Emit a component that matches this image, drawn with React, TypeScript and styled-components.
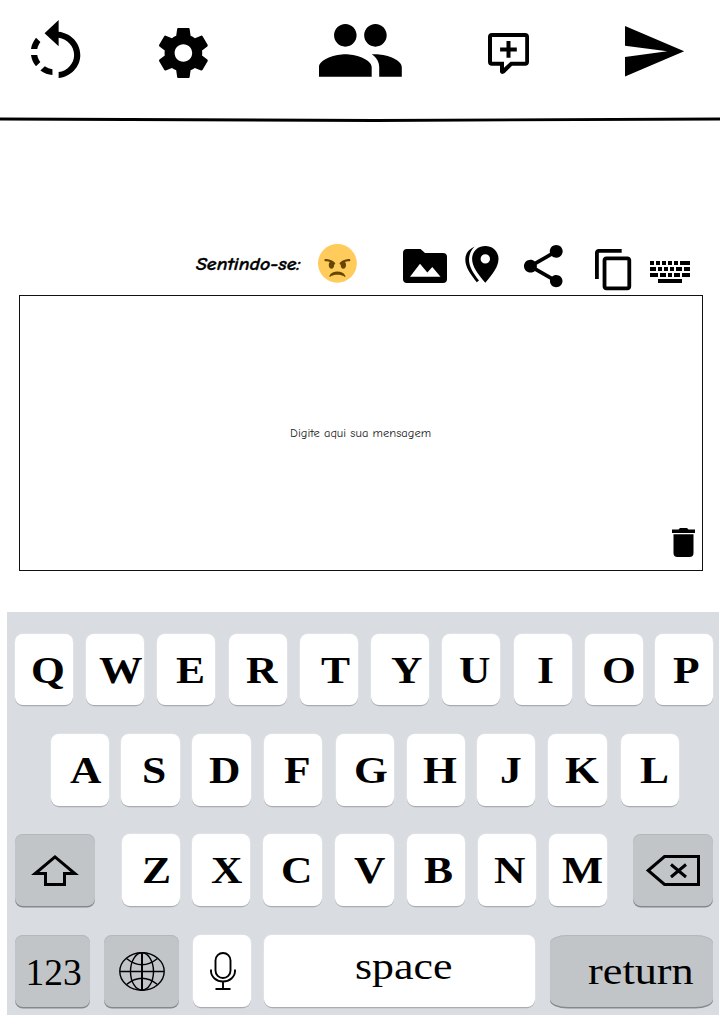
import React from "react";
import styled, { createGlobalStyle } from "styled-components";

const GlobalStyle = createGlobalStyle`
  * { box-sizing: border-box; }
  body { margin: 0; background: #fff; }
`;

const Page = styled.main`
  width: 720px;
  height: 1024px;
  display: flex;
  flex-direction: column;
  overflow: hidden;
  background: #fff;
  color: #000;
`;

const Header = styled.header`
  height: 117px;
  display: flex;
  align-items: flex-start;
`;

const IconButton = styled.button<{ $left: number; $top: number }>`
  display: block;
  flex: none;
  padding: 0;
  border: 0;
  background: none;
  color: inherit;
  margin: ${(p) => p.$top}px 0 0 ${(p) => p.$left}px;
`;

const Drawing = styled.svg`
  display: block;
  fill: currentColor;
  overflow: visible;
`;

const Divider = styled(Drawing)`
  flex: none;
`;

const Tools = styled.section`
  height: 172px;
  padding-top: 120px;
  display: flex;
  align-items: flex-start;
`;

const Feeling = styled.span`
  flex: none;
  width: 107px;
  margin: 11px 0 0 196px;
  font: italic 700 17px/22px "Comic Sans MS", "Comic Neue", "DejaVu Sans", sans-serif;
  white-space: nowrap;
  transform: scaleX(1.17);
  transform-origin: left;
  -webkit-text-stroke: 0.3px #000;
`;

const MessageBox = styled.section`
  width: 684px;
  height: 276px;
  margin-left: 19px;
  border: 1px solid #111;
  display: grid;
  grid-template-rows: 1fr auto;
  flex: none;
`;

const Placeholder = styled.p`
  margin: 129px 0 0 270px;
  font: 400 12px/16px "Comic Sans MS", "Comic Neue", "Open Sans", sans-serif;
  color: #222;
  white-space: nowrap;
  transform: scaleX(1.045);
  transform-origin: left;
`;

const BoxFooter = styled.div`
  display: flex;
  justify-content: flex-end;
  padding: 0 7px 13px 0;
`;

const Keyboard = styled.section`
  width: 712px;
  height: 403.5px;
  margin: 40.5px 0 0 7px;
  padding-top: 22px;
  background: #d9dce1;
  flex: none;
`;

const Row = styled.div<{ $gap: number }>`
  display: flex;
  align-items: flex-start;
  height: 72.3px;
  margin-bottom: ${(p) => p.$gap}px;
`;

const KeyCap = styled.button<{ $w?: number; $ml: number; $dark?: boolean; $round?: string; $h?: number }>`
  flex: none;
  display: flex;
  align-items: flex-start;
  width: ${(p) => p.$w ?? 58.3}px;
  height: ${(p) => p.$h ?? 71.8}px;
  margin: 0 0 0 ${(p) => p.$ml}px;
  padding: 0;
  border: 0;
  border-radius: ${(p) => p.$round ?? "8px"};
  background: ${(p) => (p.$dark ? "#c1c5c8" : "#fff")};
  box-shadow: ${(p) =>
    p.$dark
      ? "0 1.5px 0 #85898b, inset 0 1px 0 #b4b8bb"
      : "0 1.2px 0.5px #a9acb0, 0 0 0 0.5px #e6e8eb"};
  color: #000;
`;

const Label = styled.span<{ $x: number; $y?: number; $plain?: boolean; $stretch?: number }>`
  display: block;
  margin: ${(p) => p.$y ?? 18}px 0 0 ${(p) => p.$x}px;
  width: 0;
  white-space: nowrap;
  font-family: "Liberation Serif", "Times New Roman", serif;
  font-size: 37.5px;
  line-height: 37.5px;
  font-weight: ${(p) => (p.$plain ? 400 : 700)};
  transform: scaleX(${(p) => p.$stretch ?? 1.16});
  transform-origin: 0 0;
`;

type GlyphProps = { box: string; w: number; h: number; children: React.ReactNode };

const Glyph = ({ box, w, h, children }: GlyphProps) => (
  <Drawing viewBox={box} width={w} height={h} preserveAspectRatio="none" aria-hidden>
    {children}
  </Drawing>
);

type Letter = [char: string, marginLeft: number, labelX: number];

const topRow: Letter[] = [
  ["Q", 7.7, 16.4], ["W", 12.7, 13.5], ["E", 12.7, 18.9], ["R", 13.7, 17.5], ["T", 12.7, 21.5],
  ["Y", 12.7, 20], ["U", 12.7, 17.3], ["I", 13.7, 23.8], ["O", 12.7, 17.3], ["P", 11.7, 18.2],
];
const homeRow: Letter[] = [
  ["A", 43.5, 19.2], ["S", 12.7, 20.2], ["D", 12.7, 16.7], ["F", 13.2, 19.9], ["G", 13.4, 18],
  ["H", 12.7, 16.8], ["J", 12, 22.6], ["K", 13, 17], ["L", 14, 19.2],
];
const lowRow: Letter[] = [
  ["Z", 26.8, 20.5], ["X", 11.9, 19.2], ["C", 13.2, 18], ["V", 13.7, 18.9], ["B", 12.8, 17.5],
  ["N", 12.7, 16.8], ["M", 12.8, 13.4],
];

const Letters = ({ keys }: { keys: Letter[] }) => (
  <>
    {keys.map(([char, ml, x]) => (
      <KeyCap key={char} $ml={ml}>
        <Label $x={x}>{char}</Label>
      </KeyCap>
    ))}
  </>
);

export default function App() {
  return (
    <Page>
      <GlobalStyle />
      <Header>
        <IconButton $left={31} $top={20.3} aria-label="Desfazer">
          <Glyph box="4.07 1 15.93 19.93" w={49.3} h={58}>
            <path d="M7.11 8.53L5.7 7.11C4.8 8.27 4.24 9.61 4.07 11h2.02c.14-.87.49-1.72 1.02-2.47zM6.09 13H4.07c.17 1.39.72 2.73 1.62 3.89l1.41-1.42c-.52-.75-.87-1.59-1.01-2.47zm1.01 5.32c1.16.9 2.51 1.44 3.9 1.61V17.9c-.87-.15-1.71-.49-2.46-1.03L7.1 18.32zM13 4.07V1L8.45 5.55 13 10V7.09c2.84.48 5 2.94 5 5.91s-2.16 5.43-5 5.91v2.02c3.95-.49 7-3.85 7-7.93s-3.05-7.44-7-7.93z" />
          </Glyph>
        </IconButton>
        <IconButton $left={78.5} $top={28} aria-label="Configurações">
          <Glyph box="2.27 2 19.46 20" w={48.8} h={50}>
            <path d="M19.43 12.98c.04-.32.07-.64.07-.98s-.03-.66-.07-.98l2.11-1.65c.19-.15.24-.42.12-.64l-2-3.46c-.12-.22-.39-.3-.61-.22l-2.49 1c-.52-.4-1.08-.73-1.69-.98l-.38-2.65C14.46 2.18 14.25 2 14 2h-4c-.25 0-.46.18-.49.42l-.38 2.65c-.61.25-1.17.59-1.69.98l-2.49-1c-.23-.09-.49 0-.61.22l-2 3.46c-.13.22-.07.49.12.64l2.11 1.65c-.04.32-.07.65-.07.98s.03.66.07.98l-2.11 1.65c-.19.15-.24.42-.12.64l2 3.46c.12.22.39.3.61.22l2.49-1c.52.4 1.08.73 1.69.98l.38 2.65c.03.24.24.42.49.42h4c.25 0 .46-.18.49-.42l.38-2.65c.61-.25 1.17-.59 1.69-.98l2.49 1c.23.09.49 0 .61-.22l2-3.46c.12-.22.07-.49-.12-.64l-2.11-1.65zM12 15.5c-1.93 0-3.5-1.57-3.5-3.5s1.57-3.5 3.5-3.5 3.5 1.57 3.5 3.5-1.57 3.5-3.5 3.5z" />
          </Glyph>
        </IconButton>
        <IconButton $left={111} $top={24.3} aria-label="Pessoas">
          <Glyph box="1 5 22 14" w={82.8} h={52.8}>
            <path d="M16 11c1.66 0 2.99-1.34 2.99-3S17.66 5 16 5c-1.66 0-3 1.34-3 3s1.34 3 3 3zm-8 0c1.66 0 2.99-1.34 2.99-3S9.66 5 8 5C6.34 5 5 6.34 5 8s1.34 3 3 3zm0 2c-2.33 0-7 1.17-7 3.5V19h14v-2.5c0-2.33-4.67-3.5-7-3.5zm8 0c-.29 0-.62.02-.97.05 1.16.84 1.97 1.97 1.97 3.45V19h6v-2.5c0-2.33-4.67-3.5-7-3.5z" />
          </Glyph>
        </IconButton>
        <IconButton $left={86.5} $top={33} aria-label="Nova mensagem">
          <Glyph box="0 0 41 41" w={41} h={41}>
            <path fillRule="evenodd" d="M4 0h33a4 4 0 0 1 4 4v24.7a4 4 0 0 1-4 4H24l-7.3 7.4C15 41.6 12 41 12 38.5v-5.8H4a4 4 0 0 1-4-4V4a4 4 0 0 1 4-4zM4 4v24.700h12v6l6.600-6H37.200V4z" />
            <path d="M18.500 8h4v6.400h6.300v4h-6.300v6.300h-4v-6.300h-6.400v-4h6.400z" />
          </Glyph>
        </IconButton>
        <IconButton $left={96.5} $top={25.7} aria-label="Enviar">
          <Glyph box="2 3 21 18" w={59.2} h={50.6}>
            <path d="M2.010 21L23 12 2.010 3 2 10l15 2-15 2z" />
          </Glyph>
        </IconButton>
      </Header>
      <Divider width={720} height={6} viewBox="0 0 720 6" aria-hidden>
        <path d="M0 2Q180 2.500 375 3.500Q560 3 720 2" fill="none" stroke="#000" strokeWidth={2.8} />
      </Divider>
      <Tools>
        <Feeling>Sentindo-se:</Feeling>
        <IconButton $left={15} $top={1.4} aria-label="Bravo">
          <Glyph box="0 0 36 36" w={38.8} h={38.8}>
            <circle cx="18" cy="18" r="18" fill="#ffcb5a" />
            <path fill="#664500" d="M25.485 29.879C25.44 29.7 24.317 25.5 18 25.5c-6.318 0-7.44 4.2-7.485 4.379-.055.217.043.442.237.554.195.111.439.078.6-.077.019-.019 1.954-1.856 6.648-1.856s6.63 1.837 6.648 1.855c.096.095.224.145.352.145.084 0 .169-.021.246-.064.196-.112.294-.339.239-.557zm-9.778-12.586C12.452 14.038 7.221 14 7 14c-.552 0-.999.447-.999.998-.001.552.446 1 .998 1.002.029 0 1.925.022 3.983.737-.593.64-.982 1.634-.982 2.763 0 1.934 1.119 3.5 2.5 3.5s2.5-1.566 2.5-3.5c0-.174-.019-.34-.037-.507.013 0 .025.007.037.007.256 0 .512-.098.707-.293.391-.391.391-1.023 0-1.414zM29 14c-.221 0-5.451.038-8.707 3.293-.391.391-.391 1.023 0 1.414.195.195.451.293.707.293.013 0 .024-.007.036-.007-.016.167-.036.333-.036.507 0 1.934 1.119 3.5 2.5 3.5s2.5-1.566 2.5-3.5c0-1.129-.389-2.123-.982-2.763 2.058-.715 3.954-.737 3.984-.737.551-.002.998-.45.997-1.002-.001-.551-.447-.998-.999-.998z" />
          </Glyph>
        </IconButton>
        <IconButton $left={46.2} $top={6} aria-label="Imagens">
          <Glyph box="0 0 44 34" w={44} h={34}>
            <path fillRule="evenodd" d="M4 0h13.500l4.500 4h18a4 4 0 0 1 4 4v22a4 4 0 0 1-4 4H4a4 4 0 0 1-4-4V4a4 4 0 0 1 4-4zM7 27.700h30.500L29.300 18l-5 5.500L17 14.700z" />
          </Glyph>
        </IconButton>
        <IconButton $left={18.3} $top={2.5} aria-label="Localização">
          <Glyph box="0 0 34 37" w={34} h={37}>
            <path fillRule="evenodd" d="M20.300 0c7.500 0 13.200 5.500 13.200 12.800 0 8-5.500 14.700-13.200 24-7.700-9.300-13.200-16-13.200-24C7.100 5.500 12.800 0 20.300 0zm0 8.200a4.700 4.700 0 1 0 0 9.400 4.700 4.700 0 0 0 0-9.400z" />
            <path d="M9.500 .5C3.500 3.500 .3 7.500 .3 13.500c0 8 5.500 15 11.500 22.800l2.200-1.800C8.500 27.500 4 21 4 13.500 4 8.500 6 4.500 9.500 .5z" />
          </Glyph>
        </IconButton>
        <IconButton $left={24.6} $top={2} aria-label="Compartilhar">
          <Glyph box="3 2 18 19.920" w={38.7} h={42.3}>
            <path d="M18 16.08c-.76 0-1.44.3-1.96.77L8.91 12.7c.05-.23.09-.46.09-.7s-.04-.47-.09-.7l7.05-4.11c.54.5 1.250.81 2.040.81 1.660 0 3-1.340 3-3s-1.340-3-3-3-3 1.340-3 3c0 .24.040.47.090.7L8.040 9.810C7.500 9.310 6.790 9 6 9c-1.660 0-3 1.340-3 3s1.340 3 3 3c.79 0 1.500-.31 2.040-.81l7.120 4.160c-.05.21-.08.43-.08.65 0 1.610 1.310 2.920 2.920 2.920 1.610 0 2.920-1.310 2.920-2.920s-1.310-2.920-2.920-2.920z" />
          </Glyph>
        </IconButton>
        <IconButton $left={32.2} $top={6} aria-label="Copiar">
          <Glyph box="2 1 19 22" w={36.2} h={41.3}>
            <path d="M16 1H4c-1.100 0-2 .9-2 2v14h2V3h12V1zm3 4H8c-1.100 0-2 .9-2 2v14c0 1.100.9 2 2 2h11c1.100 0 2-.9 2-2V7c0-1.100-.9-2-2-2zm0 16H8V7h11v14z" />
          </Glyph>
        </IconButton>
        <IconButton $left={19} $top={18} aria-label="Teclado">
          <Glyph box="0 0 40 22" w={40} h={22}>
            <path d="M0 0h4v4H0zM6 0h4v4H6zM12 0h4v4h-4zM18 0h4v4h-4zM24 0h4v4h-4zM30 0h10v4H30zM0 6h6v4H0zM8 6h4v4H8zM14 6h4v4h-4zM20 6h4v4h-4zM26 6h6v4h-6zM34 6h6v4h-6zM0 12h8v4H0zM10 12h6v4h-6zM18 12h4v4h-4zM24 12h6v4h-6zM32 12h8v4h-8zM8 18h24v4H8z" />
          </Glyph>
        </IconButton>
      </Tools>
      <MessageBox>
        <Placeholder>Digite aqui sua mensagem</Placeholder>
        <BoxFooter>
          <IconButton $left={0} $top={0} aria-label="Apagar">
            <Glyph box="0 0 23 29" w={23} h={29}>
              <path d="M0 1.500h6.500L8 0h7l1.500 1.500H23V5H0zM1.500 6.200h20V25a4 4 0 0 1-4 4h-12a4 4 0 0 1-4-4z" />
            </Glyph>
          </IconButton>
        </BoxFooter>
      </MessageBox>
      <Keyboard>
        <Row $gap={28}>
          <Letters keys={topRow} />
        </Row>
        <Row $gap={28}>
          <Letters keys={homeRow} />
        </Row>
        <Row $gap={28.7}>
          <KeyCap $ml={8} $w={80} $dark aria-label="Shift">
            <IconButton as="span" $left={16} $top={21}>
              <Glyph box="0 0 48 31" w={48} h={31}>
                <path fill="none" stroke="#000" strokeWidth="3" d="M24 1.900 4.200 18.500H14.500V29.500H33.500V18.500H43.800z" />
              </Glyph>
            </IconButton>
          </KeyCap>
          <Letters keys={lowRow} />
          <KeyCap $ml={26.2} $w={80} $dark aria-label="Apagar letra">
            <IconButton as="span" $left={13} $top={21}>
              <Glyph box="0 0 54 31" w={54} h={31}>
                <path fill="none" stroke="#000" strokeWidth="3" d="M2.200 15.500 18.500 1.500H52.500V29.500H18.500zM25 9.500l15 12.500M40 9.500 25 22" />
              </Glyph>
            </IconButton>
          </KeyCap>
        </Row>
        <Row $gap={0}>
          <KeyCap $ml={8} $w={75} $dark>
            <Label $plain $x={10.5} $y={18.6} $stretch={1}>123</Label>
          </KeyCap>
          <KeyCap $ml={14} $w={75} $dark aria-label="Idioma">
            <IconButton as="span" $left={14.5} $top={16.5}>
              <Glyph box="0 0 46 39" w={46} h={39}>
                <g fill="none" stroke="#000" strokeWidth="1.400">
                  <ellipse cx="23" cy="19.500" rx="22.200" ry="18.700" />
                  <ellipse cx="23" cy="19.500" rx="11.500" ry="18.700" />
                  <path d="M7.500 6.500Q23 19 38.500 6.500M7.500 32.500Q23 20 38.500 32.500M1 19.500H45" />
                  <path d="M23 1V38" strokeWidth="2" />
                </g>
              </Glyph>
            </IconButton>
          </KeyCap>
          <KeyCap $ml={14} aria-label="Microfone">
            <IconButton as="span" $left={16.5} $top={17}>
              <Glyph box="0 0 26 38" w={26} h={38}>
                <g fill="none" stroke="#000" strokeWidth="1.900">
                  <rect x="5.500" y="1" width="15" height="25" rx="7.500" />
                  <path d="M1 17.500V19a12 10.500 0 0 0 24 0V17.500M13 29.500V37M5.500 37H20.500" />
                </g>
              </Glyph>
            </IconButton>
          </KeyCap>
          <KeyCap $ml={13} $w={271}>
            <Label $plain $x={91.2} $y={12.7} $stretch={1.17}>space</Label>
          </KeyCap>
          <KeyCap $ml={14.5} $w={163} $h={72.3} $dark $round="18px / 8px">
            <Label $plain $x={37.8} $y={18} $stretch={1.18}>return</Label>
          </KeyCap>
        </Row>
      </Keyboard>
    </Page>
  );
}
